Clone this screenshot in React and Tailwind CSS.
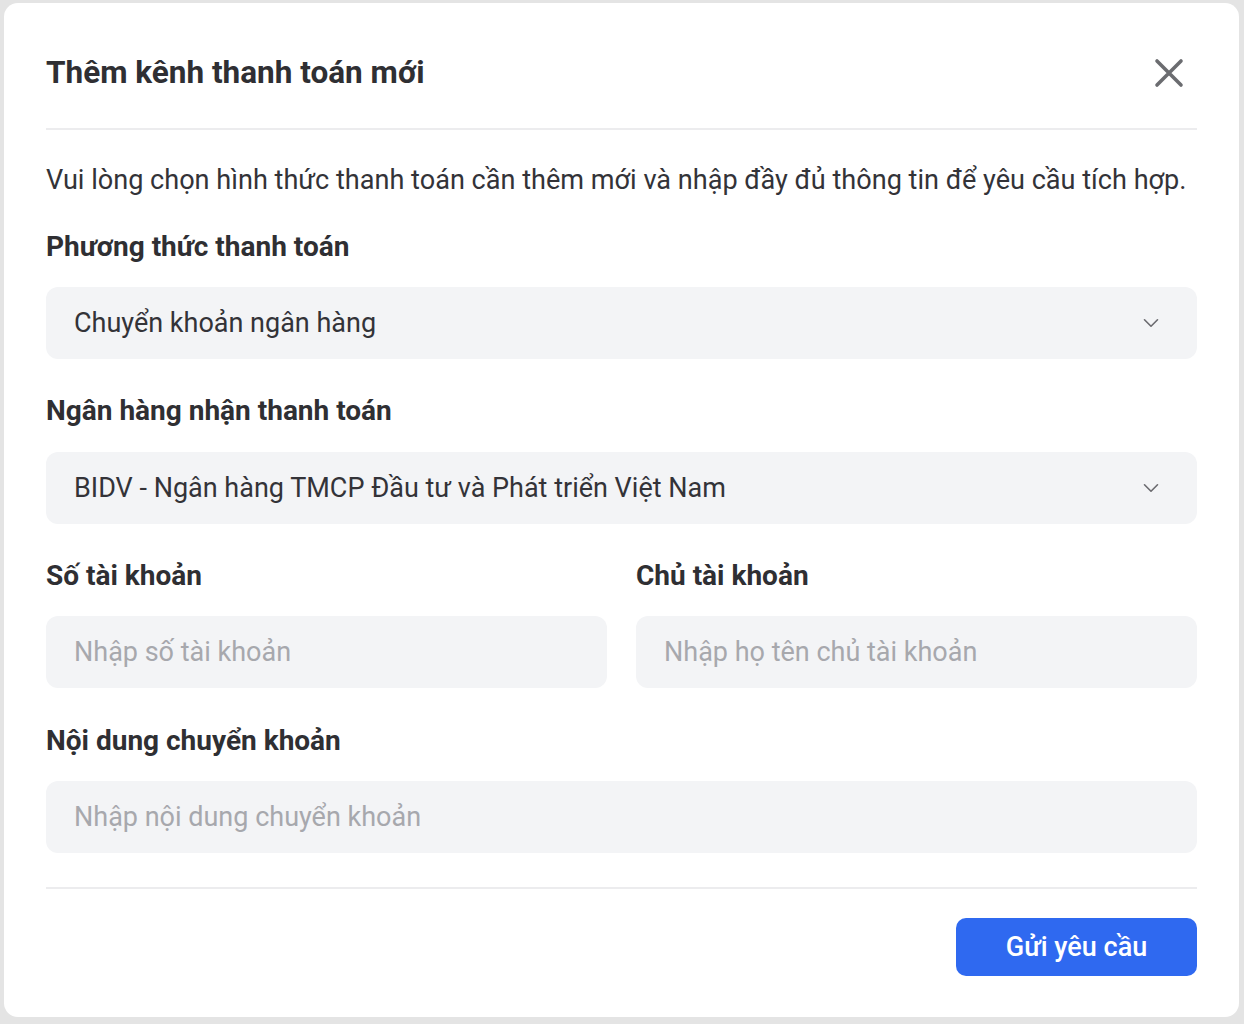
import { ChevronDown } from 'lucide-react';

const FONT = { fontFamily: 'Roboto, "Noto Sans", sans-serif' };

function Label({ children }) {
  return <p className="text-[28px] leading-[36px] font-bold text-[#2f2f33]">{children}</p>;
}

function Select({ value, gap }) {
  return (
    <div className={`${gap} h-[72px] rounded-[12px] bg-[#f3f4f6] flex items-center justify-between pl-[28px] pr-[33px]`}>
      <span className="text-[27px] text-[#333338]">{value}</span>
      <ChevronDown size={26} strokeWidth={1.5} className="text-[#6b6b70]" />
    </div>
  );
}

function Input({ placeholder }) {
  return (
    <div className="mt-[22px] h-[72px] rounded-[12px] bg-[#f3f4f6] flex items-center pl-[28px]">
      <span className="text-[27px] text-[#a7a8ad]">{placeholder}</span>
    </div>
  );
}

export default function App() {
  return (
    <div className="w-[1244px] h-[1024px] bg-[#e4e4e4] pt-[3px] pl-[4px] pr-[5px] pb-[7px]" style={FONT}>
      <div className="h-full bg-white rounded-[14px] px-[42px] pt-[42px]">
        {/* Header */}
        <div className="flex items-center justify-between h-[56px]">
          <h2 className="text-[31.5px] font-bold text-[#2f2f33]">Thêm kênh thanh toán mới</h2>
          <svg width="30" height="30" viewBox="0 0 30 30" className="mr-[13px] text-[#6b6c70]">
            <path d="M3 3L27 27M27 3L3 27" stroke="currentColor" strokeWidth="3.6" strokeLinecap="round" />
          </svg>
        </div>
        <div className="mt-[27px] h-[2px] bg-[#ececee]" />

        <p className="mt-[32px] text-[27.1px] leading-[36px] text-[#333338]">
          Vui lòng chọn hình thức thanh toán cần thêm mới và nhập đầy đủ thông tin để yêu cầu tích hợp.
        </p>

        <div className="mt-[31px]">
          <Label>Phương thức thanh toán</Label>
          <Select gap="mt-[22px]" value="Chuyển khoản ngân hàng" />
        </div>

        <div className="mt-[34px]">
          <Label>Ngân hàng nhận thanh toán</Label>
          <Select gap="mt-[23px]" value="BIDV - Ngân hàng TMCP Đầu tư và Phát triển Việt Nam" />
        </div>

        <div className="mt-[34px] grid grid-cols-2 gap-[29px]">
          <div>
            <Label>Số tài khoản</Label>
            <Input placeholder="Nhập số tài khoản" />
          </div>
          <div>
            <Label>Chủ tài khoản</Label>
            <Input placeholder="Nhập họ tên chủ tài khoản" />
          </div>
        </div>

        <div className="mt-[35px]">
          <Label>Nội dung chuyển khoản</Label>
          <Input placeholder="Nhập nội dung chuyển khoản" />
        </div>

        <div className="mt-[34px] h-[2px] bg-[#ececee]" />

        <div className="mt-[29px] flex justify-end">
          <button className="w-[241px] h-[58px] rounded-[10px] bg-[#2f69f0] text-white text-[27px] font-medium">
            Gửi yêu cầu
          </button>
        </div>
      </div>
    </div>
  );
}
